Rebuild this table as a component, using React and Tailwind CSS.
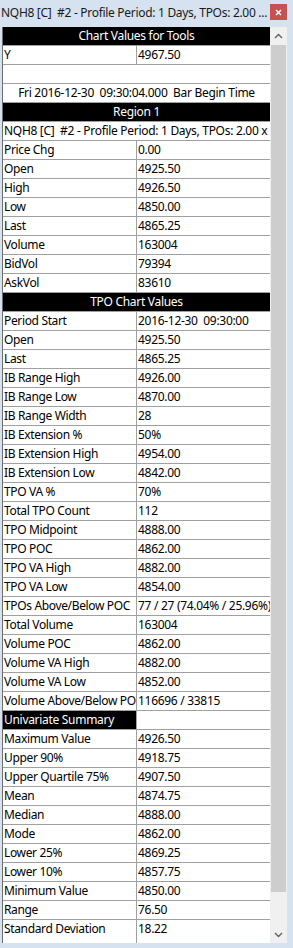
import React from "react";

const rows = [
  { t: "head", text: "Chart Values for Tools" },
  { t: "kv", k: "Y", v: "4967.50" },
  { t: "empty" },
  { t: "center", text: "Fri 2016-12-30  09:30:04.000  Bar Begin Time" },
  { t: "head", text: "Region 1" },
  { t: "full", text: "NQH8 [C]  #2 - Profile Period: 1 Days, TPOs: 2.00 x" },
  { t: "kv", k: "Price Chg", v: "0.00" },
  { t: "kv", k: "Open", v: "4925.50" },
  { t: "kv", k: "High", v: "4926.50" },
  { t: "kv", k: "Low", v: "4850.00" },
  { t: "kv", k: "Last", v: "4865.25" },
  { t: "kv", k: "Volume", v: "163004" },
  { t: "kv", k: "BidVol", v: "79394" },
  { t: "kv", k: "AskVol", v: "83610" },
  { t: "head", text: "TPO Chart Values" },
  { t: "kv", k: "Period Start", v: "2016-12-30  09:30:00" },
  { t: "kv", k: "Open", v: "4925.50" },
  { t: "kv", k: "Last", v: "4865.25" },
  { t: "kv", k: "IB Range High", v: "4926.00" },
  { t: "kv", k: "IB Range Low", v: "4870.00" },
  { t: "kv", k: "IB Range Width", v: "28" },
  { t: "kv", k: "IB Extension %", v: "50%" },
  { t: "kv", k: "IB Extension High", v: "4954.00" },
  { t: "kv", k: "IB Extension Low", v: "4842.00" },
  { t: "kv", k: "TPO VA %", v: "70%" },
  { t: "kv", k: "Total TPO Count", v: "112" },
  { t: "kv", k: "TPO Midpoint", v: "4888.00" },
  { t: "kv", k: "TPO POC", v: "4862.00" },
  { t: "kv", k: "TPO VA High", v: "4882.00" },
  { t: "kv", k: "TPO VA Low", v: "4854.00" },
  { t: "kv", k: "TPOs Above/Below POC", v: "77 / 27 (74.04% / 25.96%)" },
  { t: "kv", k: "Total Volume", v: "163004" },
  { t: "kv", k: "Volume POC", v: "4862.00" },
  { t: "kv", k: "Volume VA High", v: "4882.00" },
  { t: "kv", k: "Volume VA Low", v: "4852.00" },
  { t: "kv", k: "Volume Above/Below PO", v: "116696 / 33815" },
  { t: "uni", k: "Univariate Summary" },
  { t: "kv", k: "Maximum Value", v: "4926.50" },
  { t: "kv", k: "Upper 90%", v: "4918.75" },
  { t: "kv", k: "Upper Quartile 75%", v: "4907.50" },
  { t: "kv", k: "Mean", v: "4874.75" },
  { t: "kv", k: "Median", v: "4888.00" },
  { t: "kv", k: "Mode", v: "4862.00" },
  { t: "kv", k: "Lower 25%", v: "4869.25" },
  { t: "kv", k: "Lower 10%", v: "4857.75" },
  { t: "kv", k: "Minimum Value", v: "4850.00" },
  { t: "kv", k: "Range", v: "76.50" },
  { t: "kv", k: "Standard Deviation", v: "18.22", last: true },
];

function Row({ r }) {
  const base = "h-[19px] shrink-0 flex whitespace-pre overflow-hidden leading-[18px]";
  const line = r.last ? "" : "border-b border-[#a0a0a0]";
  if (r.t === "head")
    return (
      <div className={`${base} bg-black text-white justify-center border-b border-[#a0a0a0]`}>
        {r.text}
      </div>
    );
  if (r.t === "empty") return <div className={`${base} ${line}`} />;
  if (r.t === "center")
    return <div className={`${base} ${line} justify-center`}>{r.text}</div>;
  if (r.t === "full")
    return <div className={`${base} ${line} pl-[1px]`}>{r.text}</div>;
  if (r.t === "uni")
    return (
      <div className={`${base} ${line}`}>
        <div className="w-[134px] shrink-0 bg-black text-white pl-[1px] border-r border-[#a0a0a0]">
          {r.k}
        </div>
        <div className="flex-1" />
      </div>
    );
  return (
    <div className={`${base} ${line}`}>
      <div className="w-[134px] shrink-0 pl-[1px] border-r border-[#a0a0a0] tracking-[-0.35px]">
        {r.k}
      </div>
      <div className="flex-1 min-w-0 overflow-hidden pl-[1px]">{r.v}</div>
    </div>
  );
}

function Chevron({ up }) {
  return (
    <svg width="9" height="6" viewBox="0 0 9 6">
      <polyline
        points={up ? "1,5 4.5,1.5 8,5" : "1,1 4.5,4.5 8,1"}
        fill="none"
        stroke="#606060"
        strokeWidth="1.4"
      />
    </svg>
  );
}

export default function App() {
  return (
    <div className="w-[293px] h-[948px] bg-[#d6e2ef] flex flex-col overflow-hidden font-['Noto_Sans',sans-serif] text-[12px] tracking-[-0.3px] text-black">
      <div className="h-[27px] shrink-0 flex items-start justify-between">
        <div className="pl-[1px] pt-[4px] leading-[18px] whitespace-pre text-[#1a1a1a]">
          NQH8 [C]  #2 - Profile Period: 1 Days, TPOs: 2.00 ...
        </div>
        <div className="mt-[4px] mr-[6px] w-[17px] h-[16px] shrink-0 bg-[#c75050] flex items-center justify-center">
          <svg width="7" height="7" viewBox="0 0 7 7">
            <path d="M1 1L6 6M6 1L1 6" stroke="white" strokeWidth="1.5" />
          </svg>
        </div>
      </div>
      <div className="flex-1 flex pl-[2px] pr-[6px] pb-[5px] min-h-0">
        <div className="w-[268px] shrink-0 bg-white border-l border-[#6d6d6d] flex flex-col overflow-hidden">
          {rows.map((r, i) => (
            <Row key={i} r={r} />
          ))}
          <div className="flex-1 flex">
            <div className="w-[134px] border-r border-[#a0a0a0]" />
          </div>
        </div>
        <div className="w-[17px] shrink-0 bg-[#f0f0f0] flex flex-col">
          <div className="h-[18px] flex items-center justify-center">
            <Chevron up />
          </div>
          <div className="h-[847px] mx-[1px] bg-[#cdcdcd]" />
          <div className="flex-1" />
          <div className="h-[17px] flex items-center justify-center">
            <Chevron />
          </div>
        </div>
      </div>
    </div>
  );
}
